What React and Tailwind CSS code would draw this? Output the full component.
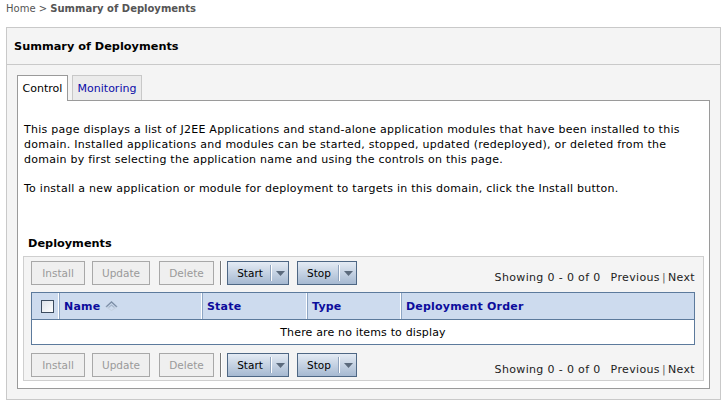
import React from 'react';

function GrayButton({ label, width }) {
  return (
    <div
      className="h-[24px] flex items-center justify-center border border-[#a8a8a8] bg-[#efefef] text-[#9a9a9a] text-[10.5px]"
      style={{ width }}
    >
      {label}
    </div>
  );
}

function MenuButton({ label, width }) {
  return (
    <div
      className="h-[24px] flex items-center border border-[#4e6784] bg-gradient-to-b from-[#e4ebf4] to-[#a6b9d1] text-black text-[10.5px]"
      style={{ width }}
    >
      <span className="flex-1 text-center pl-[2px]">{label}</span>
      <span className="w-[2px] h-[16px] bg-white border-l border-[#8fa3bd]" />
      <span className="w-[16px] flex items-center justify-center">
        <svg width="9" height="5" viewBox="0 0 9 5">
          <path d="M0 0h9L4.5 5z" fill="#5b6a7c" />
        </svg>
      </span>
    </div>
  );
}

function Toolbar() {
  return (
    <div className="flex items-center h-[24px]">
      <GrayButton label="Install" width={54} />
      <div className="w-[7px]" />
      <GrayButton label="Update" width={58} />
      <div className="w-[9px]" />
      <GrayButton label="Delete" width={55} />
      <div className="w-[2px] h-[24px] ml-[6px] mr-[5px] bg-[#777] border-r border-white" />
      <MenuButton label="Start" width={62} />
      <div className="w-[8px]" />
      <MenuButton label="Stop" width={60} />
      <div className="flex-1" />
      <div className="text-[#222] pt-[8px] text-[11px] tracking-[0.35px]">
        Showing 0 - 0 of 0<span className="ml-[10px]">Previous</span>
        <span className="mx-[2px] text-[#666]">|</span>Next
      </div>
    </div>
  );
}

function SortIcon() {
  return (
    <svg width="15" height="10" viewBox="0 0 15 10" className="ml-[4px]">
      <path d="M2 6L7.5 1 13 6" fill="none" stroke="#7c8ea6" strokeWidth="1.3" />
      <path d="M2 6L7.5 9.5 13 6" fill="none" stroke="#c3cfdd" strokeWidth="1" />
      <path d="M4.5 6.5L7.5 4 10.5 6.5" fill="none" stroke="#a8b8cc" strokeWidth="1.2" />
    </svg>
  );
}

export default function App() {
  const head = 'h-[26px] flex items-center pl-[4px] font-bold text-[11px] tracking-[0.2px] text-[#0c0c9c] border-r border-[#8ea6c4] shadow-[inset_-1px_0_0_#ffffff]';
  return (
    <div className="w-[727px] h-[407px] bg-white overflow-hidden text-[10px] leading-[15px] text-black font-['DejaVu_Sans',sans-serif]">
      <div className="h-[27px] pl-[6px] pt-[1px] text-[#555]">
        Home &gt; <span className="font-bold">Summary of Deployments</span>
      </div>

      <div className="ml-[6px] w-[715px] h-[373px] border border-[#c9c9c9] bg-[#f4f4f4]">
        <div className="h-[37px] border-b border-[#c9c9c9] pl-[7px] flex items-center text-[11.3px] font-bold">
          Summary of Deployments
        </div>

        <div className="px-[10px] pt-[10px]">
          {/* tabs */}
          <div className="flex items-end h-[25px]">
            <div className="h-[26px] w-[51px] -mb-[1px] relative z-10 bg-white border border-[#9a9a9a] border-b-0 flex items-center justify-center text-[11px]">
              Control
            </div>
            <div className="w-[4px]" />
            <div className="h-[25px] w-[70px] bg-[#ebebeb] border border-[#c8c8c8] border-b-0 flex items-center justify-center text-[11px] text-[#0c0ca8]">
              Monitoring
            </div>
          </div>

          <div className="h-[289px] bg-white border border-[#9a9a9a] px-[5px] pt-[21px] pb-[7px] flex flex-col">
            <div className="px-[1px] text-[11px] tracking-[0.25px]">
              <p>
                This page displays a list of J2EE Applications and stand-alone application modules that have been installed to this
                domain. Installed applications and modules can be started, stopped, updated (redeployed), or deleted from the
                domain by first selecting the application name and using the controls on this page.
              </p>
              <p className="mt-[14px]">
                To install a new application or module for deployment to targets in this domain, click the Install button.
              </p>
            </div>

            <div className="mt-[41px] pl-[5px] font-bold text-[11.3px] h-[14px] leading-[14px]">Deployments</div>

            <div className="mt-[5px] flex-1 border border-[#cfcfcf] bg-[#f4f4f4] pl-[7px] pr-[8px] pt-[4px]">
              <Toolbar />

              <div className="mt-[7px] border border-[#5c7a9c] bg-white">
                <div className="flex bg-[#cddbee] border-b border-[#5c7a9c]">
                  <div className={head + ' w-[28px] justify-center pl-0'}>
                    <span className="w-[13px] h-[13px] border border-[#3c4c60] bg-gradient-to-br from-[#dde3ea] to-white" />
                  </div>
                  <div className={head + ' w-[143px]'}>
                    Name
                    <SortIcon />
                  </div>
                  <div className={head + ' w-[105px]'}>State</div>
                  <div className={head + ' w-[94px]'}>Type</div>
                  <div className={head + ' flex-1 border-r-0 shadow-none'}>Deployment Order</div>
                </div>
                <div className="h-[24px] flex items-center justify-center text-[11px] tracking-[0.15px]">
                  There are no items to display
                </div>
              </div>

              <div className="mt-[8px]">
                <Toolbar />
              </div>
            </div>
          </div>
        </div>
      </div>
    </div>
  );
}
